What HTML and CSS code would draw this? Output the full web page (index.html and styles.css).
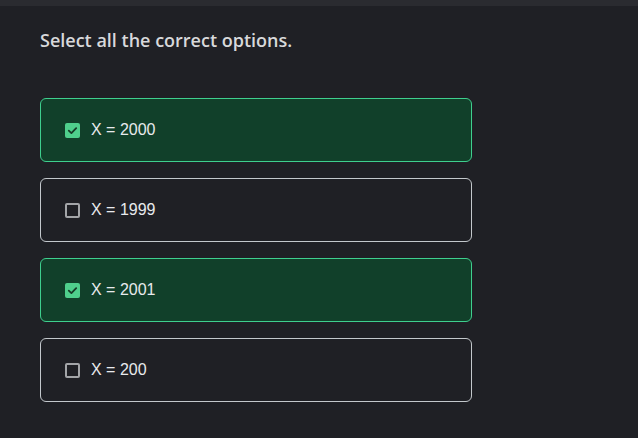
FILE: index.html
```html
<!DOCTYPE html>
<html>
<head>
<meta charset="utf-8">
<link rel="stylesheet" href="styles.css">
</head>
<body>
<div class="topbar"></div>
<main class="content">
  <h1 class="title">Select all the correct options.</h1>
  <div class="options">
    <label class="option selected">
      <span class="box checked"><svg viewBox="0 0 15 15" width="15" height="15"><path d="M3.8 7.6l2.6 2.5 4.8-5" fill="none" stroke="#173b28" stroke-width="1.8" stroke-linecap="round" stroke-linejoin="round"/></svg></span>
      <span class="label">X = 2000</span>
    </label>
    <label class="option">
      <span class="box"></span>
      <span class="label">X = 1999</span>
    </label>
    <label class="option selected">
      <span class="box checked"><svg viewBox="0 0 15 15" width="15" height="15"><path d="M3.8 7.6l2.6 2.5 4.8-5" fill="none" stroke="#173b28" stroke-width="1.8" stroke-linecap="round" stroke-linejoin="round"/></svg></span>
      <span class="label">X = 2001</span>
    </label>
    <label class="option">
      <span class="box"></span>
      <span class="label">X = 200</span>
    </label>
  </div>
</main>
</body>
</html>
```
FILE: styles.css
```css
html, body {
  margin: 0;
  padding: 0;
  background: #1f2025;
  height: 100%;
}
.topbar {
  height: 6px;
  background: #2a2b30;
}
.content {
  padding: 20px 40px 0 40px;
}
.title {
  margin: 0;
  font-family: "Open Sans", sans-serif;
  font-weight: 600;
  font-size: 18px;
  line-height: 28px;
  color: #d8d9db;
}
.options {
  margin-top: 44px;
  display: flex;
  flex-direction: column;
  gap: 16px;
  width: 432px;
}
.option {
  box-sizing: border-box;
  height: 64px;
  display: flex;
  align-items: center;
  padding-left: 24px;
  border: 1px solid #c3c8cc;
  border-radius: 6px;
  background: #1f2025;
}
.option.selected {
  border-color: #3ecf8e;
  background: #11402a;
}
.box {
  box-sizing: border-box;
  width: 15px;
  height: 15px;
  border: 2px solid #a3a5a8;
  border-radius: 2px;
  display: flex;
}
.box.checked {
  border: none;
  background: #4fcf8c;
}
.label {
  margin-left: 11px;
  font-family: "Liberation Sans", Arial, sans-serif;
  font-size: 16px;
  color: #e8eaed;
}
```
